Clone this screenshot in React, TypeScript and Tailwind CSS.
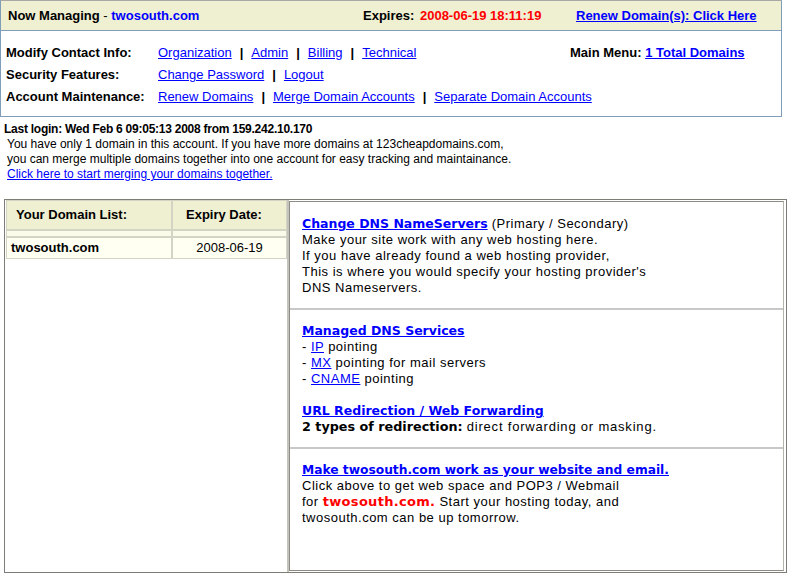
import React from 'react';

const Sep = () => <span className="px-[8px] font-bold">|</span>;

const A: React.FC<{ children: React.ReactNode; className?: string }> = ({ children, className = '' }) => (
  <a href="#" className={`text-[#0000ff] underline ${className}`}>
    {children}
  </a>
);

export default function App() {
  const sans = "font-['Liberation_Sans',Arial,sans-serif]";
  const verdana = "font-['DejaVu_Sans',Verdana,sans-serif]";

  return (
    <div className={`w-[789px] h-[576px] bg-white text-black ${sans} overflow-hidden`}>
      {/* Top management box */}
      <div className="w-[782px] border border-[#7f9db9] border-t-[#a8a8a8]">
        <div className="h-[30px] bg-[#efefd2] border-b border-[#7f9db9] flex items-center pl-[7px] text-[13px]">
          <span className="w-[355px]">
            <b>Now Managing</b> - <b className="text-[#0000ff]">twosouth.com</b>
          </span>
          <span className="w-[213px]">
            <b>Expires:</b> <b className="text-[#ff0000] ml-[2px]">2008-06-19 18:11:19</b>
          </span>
          <A className="font-bold">Renew Domain(s): Click Here</A>
        </div>
        <div className="pt-[11px] pb-[8px] pl-[5px] grid grid-cols-[152px_412px_auto] text-[13px] leading-[22px]">
          <b>Modify Contact Info:</b>
          <span>
            <A>Organization</A><Sep /><A>Admin</A><Sep /><A>Billing</A><Sep /><A>Technical</A>
          </span>
          <span>
            <b>Main Menu:</b> <A className="font-bold">1 Total Domains</A>
          </span>
          <b>Security Features:</b>
          <span className="col-span-2">
            <A>Change Password</A><Sep /><A>Logout</A>
          </span>
          <b>Account Maintenance:</b>
          <span className="col-span-2">
            <A>Renew Domains</A><Sep /><A>Merge Domain Accounts</A><Sep /><A>Separate Domain Accounts</A>
          </span>
        </div>
      </div>

      {/* Last login notice */}
      <div className="mt-[5px] text-[12px] leading-[15px]">
        <div className="pl-[4px] font-bold tracking-[-0.25px]">Last login: Wed Feb 6 09:05:13 2008 from 159.242.10.170</div>
        <div className="pl-[7px]">You have only 1 domain in this account. If you have more domains at 123cheapdomains.com,</div>
        <div className="pl-[7px]">you can merge multiple domains together into one account for easy tracking and maintainance.</div>
        <div className="pl-[7px]">
          <A>Click here to start merging your domains together.</A>
        </div>
      </div>

      {/* Domain list + services */}
      <div className="mt-[17px] ml-[4px] w-[783px] h-[374px] border border-[#7d7d75] flex">
        <div className="w-[284px] border-r-2 border-[#c4c4bc]">
          <div className="ml-[1px] w-[281px] grid grid-cols-[166px_115px] text-[13px]">
            <div className="h-[30px] bg-[#efefd2] border border-[#d4d4c4] flex items-center pl-[9px] font-bold">Your Domain List:</div>
            <div className="h-[30px] bg-[#efefd2] border border-[#d4d4c4] flex items-center pl-[13px] font-bold">Expiry Date:</div>
            <div className="h-[7px] bg-[#fbfbea] border border-[#d4d4c4]" />
            <div className="h-[7px] bg-[#fbfbea] border border-[#d4d4c4]" />
            <div className="h-[22px] bg-[#fffff2] border border-[#d4d4c4] flex items-center pl-[4px] font-bold">twosouth.com</div>
            <div className="h-[22px] bg-[#fffff2] border border-[#d4d4c4] flex items-center justify-center">2008-06-19</div>
          </div>
        </div>

        <div className="flex-1 mt-[1px] mr-[2px] mb-[1px] border border-[#8c8c84] border-r-[#b4b4ac] flex flex-col text-[13px] leading-[16px]">
          <div className="h-[108px] shrink-0 pt-[14px] pl-[12px] border-b-2 border-[#c8c8c8] tracking-[0.5px]">
            <div>
              <A className={`${verdana} font-bold text-[12.5px] tracking-normal`}>Change DNS NameServers</A> (Primary / Secondary)
            </div>
            <div>Make your site work with any web hosting here.</div>
            <div>If you have already found a web hosting provider,</div>
            <div>This is where you would specify your hosting provider's</div>
            <div>DNS Nameservers.</div>
          </div>

          <div className="h-[139px] shrink-0 pt-[13px] pl-[12px] border-b-2 border-[#c8c8c8] tracking-[0.5px]">
            <div>
              <A className={`${verdana} font-bold text-[12.5px] tracking-normal`}>Managed DNS Services</A>
            </div>
            <div>- <A>IP</A> pointing</div>
            <div>- <A>MX</A> pointing for mail servers</div>
            <div>- <A>CNAME</A> pointing</div>
            <div className="h-[16px]" />
            <div>
              <A className={`${verdana} font-bold text-[12.5px] tracking-normal`}>URL Redirection / Web Forwarding</A>
            </div>
            <div>
              <b className={`${verdana} text-[12.75px] tracking-normal`}>2 types of redirection:</b>{' '}
              <span className="tracking-[0.8px]">direct forwarding or masking.</span>
            </div>
          </div>

          <div className="flex-1 pt-[13px] pl-[12px] tracking-[0.5px]">
            <div>
              <A className={`${verdana} font-bold text-[12.25px] tracking-normal`}>Make twosouth.com work as your website and email.</A>
            </div>
            <div>Click above to get web space and POP3 / Webmail</div>
            <div>
              for <b className={`${verdana} text-[13px] tracking-[0.3px] text-[#ff0000]`}>twosouth.com.</b> Start your hosting today, and
            </div>
            <div>twosouth.com can be up tomorrow.</div>
          </div>
        </div>
      </div>
    </div>
  );
}
